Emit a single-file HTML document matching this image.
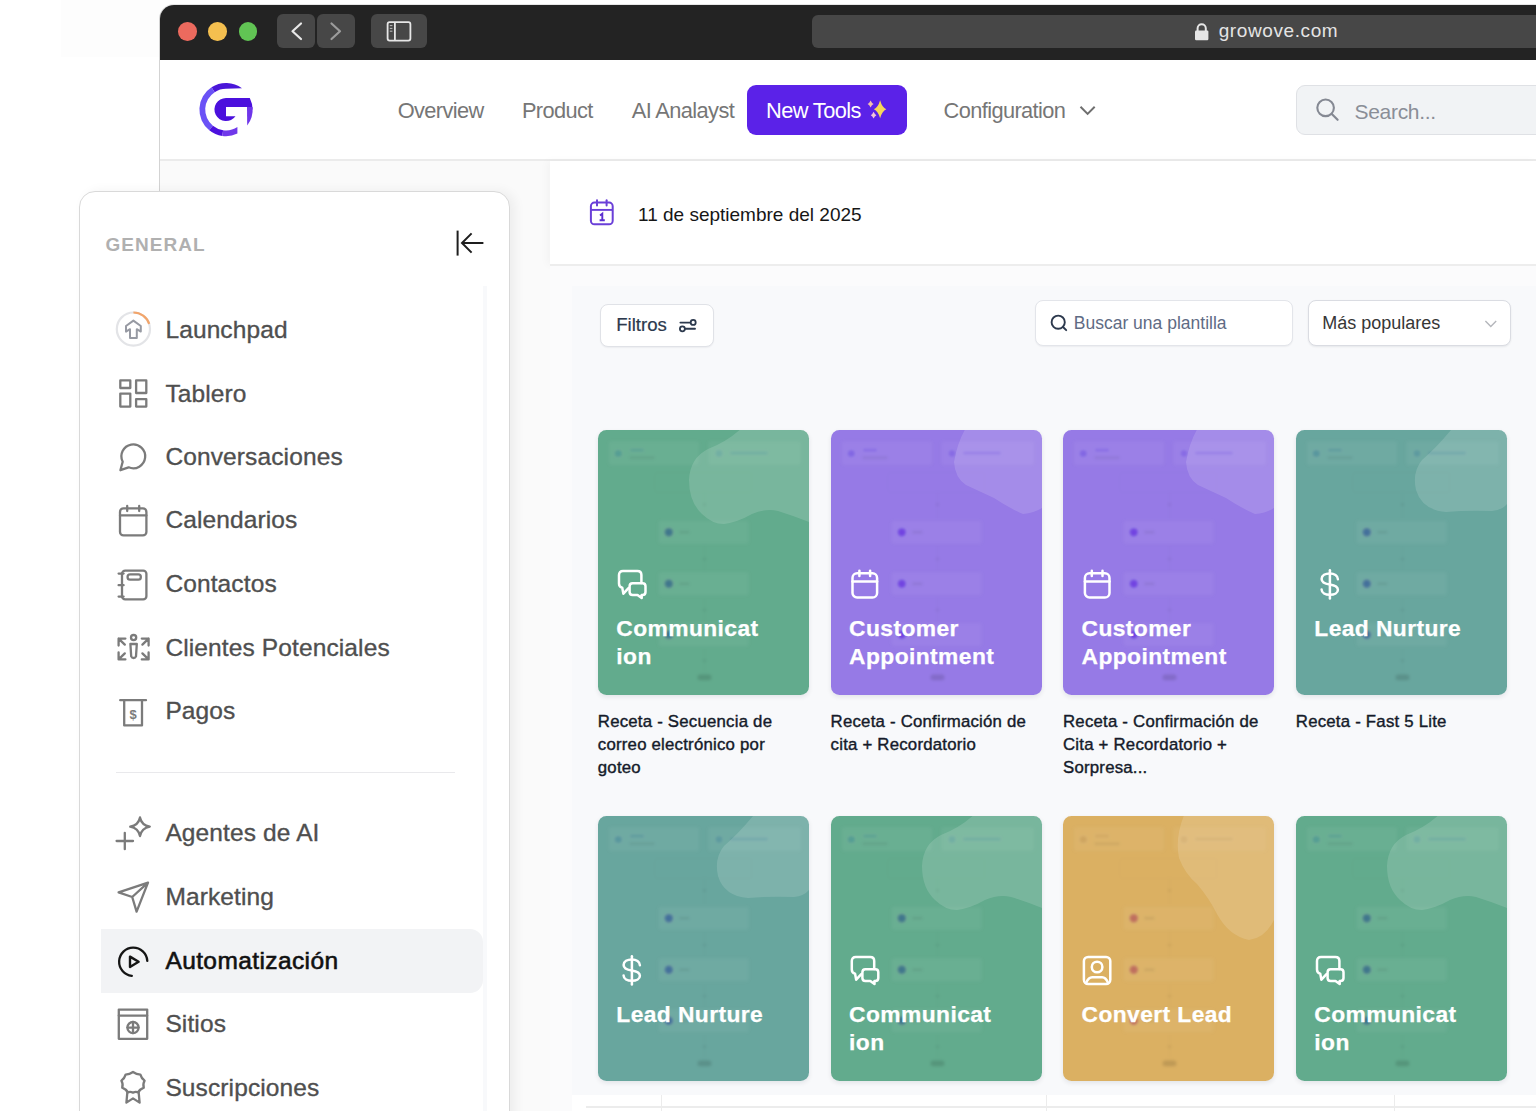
<!DOCTYPE html><html><head><meta charset="utf-8"><style>
*{margin:0;padding:0;box-sizing:border-box}
html,body{width:1536px;height:1120px;overflow:hidden;background:#fff}
body{position:relative;font-family:"Liberation Sans",sans-serif}
.a{position:absolute}
.t{position:absolute;white-space:nowrap;line-height:1}
svg{position:absolute;overflow:visible}
</style></head><body><div class="a" style="left:0;top:0;width:1536px;height:1111.3px;overflow:hidden"><div class="a" style="left:61px;top:0;width:99px;height:57px;background:#fdfdfd"></div>
<div class="a" style="left:158.5px;top:4px;width:1400px;height:1108px;border-left:1.6px solid #d3d3d3;border-top:1px solid #e6e6e6;border-top-left-radius:15px"></div>
<div class="a" style="left:160px;top:59px;width:1376px;height:1052px;background:#fff"></div>
<div class="a" style="left:160px;top:4.6px;width:1376px;height:55px;background:#232323;border-top-left-radius:14px"></div>
<div class="a" style="left:178.00px;top:22.00px;width:18.6px;height:18.6px;border-radius:50%;background:#ec6a5e"></div>
<div class="a" style="left:208.30px;top:22.00px;width:18.6px;height:18.6px;border-radius:50%;background:#f4bf4f"></div>
<div class="a" style="left:238.80px;top:22.00px;width:18.6px;height:18.6px;border-radius:50%;background:#61c454"></div>
<div class="a" style="left:277.3px;top:14.4px;width:38px;height:33.6px;border-radius:6px;background:#474747"></div>
<div class="a" style="left:317.4px;top:14.4px;width:37.3px;height:33.6px;border-radius:6px;background:#474747"></div>
<div class="a" style="left:370.7px;top:14.4px;width:56.3px;height:33.6px;border-radius:6px;background:#474747"></div>
<svg style="left:0;top:0" width="1536" height="70" viewBox="0 0 1536 70"><polyline points="301,23.5 292.5,31.2 301,39" fill="none" stroke="#e8e8e8" stroke-width="2.2" stroke-linecap="round" stroke-linejoin="round"/><polyline points="331.5,23.5 340,31.2 331.5,39" fill="none" stroke="#9c9c9c" stroke-width="2.2" stroke-linecap="round" stroke-linejoin="round"/><rect x="387.6" y="22.2" width="22.8" height="18.4" rx="2" fill="none" stroke="#e6e6e6" stroke-width="1.8"/><line x1="394.9" y1="22.2" x2="394.9" y2="40.6" stroke="#e6e6e6" stroke-width="1.8"/><line x1="389.8" y1="25.6" x2="392.4" y2="25.6" stroke="#bdbdbd" stroke-width="1"/><line x1="389.8" y1="28.4" x2="392.4" y2="28.4" stroke="#bdbdbd" stroke-width="1"/><line x1="389.8" y1="31.2" x2="392.4" y2="31.2" stroke="#bdbdbd" stroke-width="1"/></svg>
<div class="a" style="left:811.8px;top:14.7px;width:900px;height:33.3px;border-radius:6px;background:#474747"></div>
<svg style="left:0;top:0" width="1536" height="70" viewBox="0 0 1536 70"><path d="M1197.6 31.5 V28.3 A4.1 4.1 0 0 1 1205.8 28.3 V31.5" fill="none" stroke="#e6e6e6" stroke-width="2"/><rect x="1195" y="30.6" width="13.4" height="9.6" rx="1.2" fill="#e6e6e6"/></svg>
<div class="t" style="left:1218.70px;top:21.22px;font-size:19px;color:#e4e4e4;font-weight:400;letter-spacing:0.6px">growove.com</div>
<div class="a" style="left:160px;top:159px;width:1376px;height:1.5px;background:#ebebeb"></div>
<svg style="left:190px;top:75px" width="70" height="70" viewBox="190 75 70 70"><path d="M242 88.35 A26.6 26.6 0 0 0 211.51 87.29 L214.67 92.16 A20.8 20.8 0 0 1 226 88.8 Z" fill="#4a16d9"/><path d="M211.51 87.29 A26.6 26.6 0 0 0 209.26 130.27 L212.91 125.76 A20.8 20.8 0 0 1 214.67 92.16 Z" fill="#6a52f6"/><path d="M209.26 130.27 A26.6 26.6 0 0 0 222.30 135.94 L223.11 130.20 A20.8 20.8 0 0 1 212.91 125.76 Z" fill="#4c10de"/><path d="M222.30 135.94 A26.6 26.6 0 0 0 237.4 133.6 L237.4 127 A20.8 20.8 0 0 1 223.11 130.20 Z" fill="#7038ea"/><path d="M226 97.9 H249.8 A26.6 26.6 0 0 1 252.6 109.6 H247 V107 H226 V116.2 H235.5 A11.6 11.6 0 1 1 226 97.9 Z" fill="#4b10dd"/><path d="M247 107 H252.55 A26.6 26.6 0 0 1 247.2 125.6 Z" fill="#6f36ea"/></svg>
<div class="t" style="left:397.70px;top:99.85px;font-size:21.8px;color:#767676;font-weight:400;letter-spacing:-0.6px">Overview</div>
<div class="t" style="left:521.90px;top:99.85px;font-size:21.8px;color:#767676;font-weight:400;letter-spacing:-0.6px">Product</div>
<div class="t" style="left:631.70px;top:99.85px;font-size:21.8px;color:#767676;font-weight:400;letter-spacing:-0.6px">AI Analayst</div>
<div class="a" style="left:746.7px;top:85.3px;width:160.3px;height:49.7px;border-radius:9px;background:#5b22e8"></div>
<div class="t" style="left:766.00px;top:99.85px;font-size:21.8px;color:#ffffff;font-weight:400;letter-spacing:-0.6px">New Tools</div>
<svg style="left:0;top:0" width="1536" height="160" viewBox="0 0 1536 160"><defs><filter id="spb" x="-50%" y="-50%" width="200%" height="200%"><feGaussianBlur stdDeviation="0.45"/></filter></defs><g filter="url(#spb)"><path d="M880.1 100.2 Q882.0840000000001 107.4 886.3000000000001 109.2 Q882.0840000000001 111.0 880.1 118.2 Q878.116 111.0 873.9 109.2 Q878.116 107.4 880.1 100.2 Z" fill="#f6d65a"/><path d="M870.6 100.4 Q871.8000000000001 103.1 873.6 104 Q871.8000000000001 104.9 870.6 107.6 Q869.4 104.9 867.6 104 Q869.4 103.1 870.6 100.4 Z" fill="#f2bfae"/><path d="M873.6 111.8 Q874.72 114.35000000000001 876.4 115.2 Q874.72 116.05 873.6 118.60000000000001 Q872.48 116.05 870.8000000000001 115.2 Q872.48 114.35000000000001 873.6 111.8 Z" fill="#f4c6d8"/></g></svg>
<div class="t" style="left:943.50px;top:99.85px;font-size:21.8px;color:#767676;font-weight:400;letter-spacing:-0.6px">Configuration</div>
<svg style="left:0;top:0" width="1536" height="160" viewBox="0 0 1536 160"><polyline points="1080.5,106.8 1087.6,113.9 1094.7,106.8" fill="none" stroke="#6f6f6f" stroke-width="2"/></svg>
<div class="a" style="left:1296.2px;top:84.7px;width:300px;height:50.6px;border-radius:9px;background:#f1f3f5;border:1.3px solid #dfe1e5"></div>
<svg style="left:0;top:0" width="1536" height="160" viewBox="0 0 1536 160"><circle cx="1325.6" cy="107.8" r="8.3" fill="none" stroke="#858993" stroke-width="2.1"/><line x1="1331.8" y1="114" x2="1337.6" y2="119.8" stroke="#858993" stroke-width="2.2" stroke-linecap="round"/></svg>
<div class="t" style="left:1354.50px;top:100.92px;font-size:21px;color:#8a8e97;font-weight:400;letter-spacing:-0.3px">Search...</div>
<div class="a" style="left:160px;top:160.5px;width:390px;height:950.5px;background:#fafafa"></div>
<div class="a" style="left:550px;top:160.5px;width:986px;height:104px;background:#fff;box-shadow:-3px 0 8px rgba(0,0,0,0.03)"></div>
<div class="a" style="left:550px;top:264px;width:986px;height:1.5px;background:#ededed"></div>
<div class="a" style="left:550px;top:265.5px;width:986px;height:845.5px;background:#fbfbfc"></div>
<svg style="left:0;top:0" width="1536" height="300" viewBox="0 0 1536 300"><rect x="590.9" y="202.6" width="21.8" height="21.7" rx="3.6" fill="none" stroke="#6a3fd8" stroke-width="2"/><line x1="590.9" y1="209.9" x2="612.7" y2="209.9" stroke="#6a3fd8" stroke-width="1.9"/><line x1="597" y1="200.2" x2="597" y2="205.6" stroke="#6a3fd8" stroke-width="2" stroke-linecap="round"/><line x1="606.6" y1="200.2" x2="606.6" y2="205.6" stroke="#6a3fd8" stroke-width="2" stroke-linecap="round"/><path d="M600 215.4 L602.3 213.7 V220.2 M599.6 220.3 H604.8" fill="none" stroke="#5a2fd0" stroke-width="1.9"/></svg>
<div class="t" style="left:638.00px;top:204.72px;font-size:19px;color:#161616;font-weight:400;">11 de septiembre del 2025</div>
<div class="a" style="left:79.2px;top:190.6px;width:430.4px;height:940px;background:#fff;border:1.8px solid #d9d9d9;border-radius:16px;box-shadow:5px 0 12px rgba(0,0,0,0.055)"></div>
<div class="t" style="left:105.50px;top:235.12px;font-size:19px;color:#b0b0b0;font-weight:700;letter-spacing:1.05px">GENERAL</div>
<svg style="left:0;top:0" width="600" height="300" viewBox="0 0 600 300"><line x1="457.6" y1="230.6" x2="457.6" y2="255.6" stroke="#1e1e1e" stroke-width="2"/><line x1="462" y1="243" x2="483.4" y2="243" stroke="#1e1e1e" stroke-width="2"/><polyline points="471.6,233.4 462,243 471.6,252.6" fill="none" stroke="#1e1e1e" stroke-width="2"/></svg>
<div class="a" style="left:483px;top:285.8px;width:4px;height:830px;background:#f8f9fb"></div>
<div class="a" style="left:100.7px;top:928.9px;width:382.3px;height:63.8px;background:#f2f3f5;border-radius:0 13px 13px 0"></div>
<div class="a" style="left:116px;top:771.5px;width:339.3px;height:1.5px;background:#e9e9ec"></div>
<div class="t" style="left:165.40px;top:317.66px;font-size:24.5px;color:#4f4f4f;font-weight:400;-webkit-text-stroke:0.35px #4f4f4f;letter-spacing:0.12px">Launchpad</div>
<div class="t" style="left:165.40px;top:381.66px;font-size:24.5px;color:#4f4f4f;font-weight:400;-webkit-text-stroke:0.35px #4f4f4f;letter-spacing:0.12px">Tablero</div>
<div class="t" style="left:165.40px;top:445.36px;font-size:24.5px;color:#4f4f4f;font-weight:400;-webkit-text-stroke:0.35px #4f4f4f;letter-spacing:0.12px">Conversaciones</div>
<div class="t" style="left:165.40px;top:508.46px;font-size:24.5px;color:#4f4f4f;font-weight:400;-webkit-text-stroke:0.35px #4f4f4f;letter-spacing:0.12px">Calendarios</div>
<div class="t" style="left:165.40px;top:572.26px;font-size:24.5px;color:#4f4f4f;font-weight:400;-webkit-text-stroke:0.35px #4f4f4f;letter-spacing:0.12px">Contactos</div>
<div class="t" style="left:165.40px;top:635.86px;font-size:24.5px;color:#4f4f4f;font-weight:400;-webkit-text-stroke:0.35px #4f4f4f;letter-spacing:0.12px">Clientes Potenciales</div>
<div class="t" style="left:165.40px;top:699.26px;font-size:24.5px;color:#4f4f4f;font-weight:400;-webkit-text-stroke:0.35px #4f4f4f;letter-spacing:0.12px">Pagos</div>
<div class="t" style="left:165.40px;top:820.96px;font-size:24.5px;color:#4f4f4f;font-weight:400;-webkit-text-stroke:0.35px #4f4f4f;letter-spacing:0.12px">Agentes de AI</div>
<div class="t" style="left:165.40px;top:884.76px;font-size:24.5px;color:#4f4f4f;font-weight:400;-webkit-text-stroke:0.35px #4f4f4f;letter-spacing:0.12px">Marketing</div>
<div class="t" style="left:165.40px;top:948.56px;font-size:24.5px;color:#111111;font-weight:400;-webkit-text-stroke:0.35px #111111;letter-spacing:0.4px;-webkit-text-stroke:0.6px #111">Automatización</div>
<div class="t" style="left:165.40px;top:1011.56px;font-size:24.5px;color:#4f4f4f;font-weight:400;-webkit-text-stroke:0.35px #4f4f4f;letter-spacing:0.12px">Sitios</div>
<div class="t" style="left:165.40px;top:1075.66px;font-size:24.5px;color:#4f4f4f;font-weight:400;-webkit-text-stroke:0.35px #4f4f4f;letter-spacing:0.12px">Suscripciones</div>
<svg style="left:0;top:0" width="600" height="1120" viewBox="0 0 600 1120"><circle cx="133.4" cy="329.1" r="16.6" fill="none" stroke="#e3e4e7" stroke-width="2.2"/><path d="M133.4 312.5 A16.6 16.6 0 0 1 149.2 323.9" fill="none" stroke="#f2a56b" stroke-width="2.2"/><path d="M133.4 320.6 L140.8 326 V331.6 L136.8 329.2 V338 H130 V329.2 L126 331.6 V326 Z" fill="none" stroke="#979aa3" stroke-width="2" stroke-linejoin="round"/><rect x="120.3" y="380.4" width="10" height="7.6" fill="none" stroke="#7b7b7b" stroke-width="2.3" stroke-linecap="round" stroke-linejoin="round" stroke-linecap="butt" stroke-linejoin="miter"/><rect x="136.1" y="380.4" width="10.2" height="12.6" fill="none" stroke="#7b7b7b" stroke-width="2.3" stroke-linecap="round" stroke-linejoin="round" stroke-linecap="butt" stroke-linejoin="miter"/><rect x="120.3" y="393.6" width="10" height="13" fill="none" stroke="#7b7b7b" stroke-width="2.3" stroke-linecap="round" stroke-linejoin="round" stroke-linecap="butt" stroke-linejoin="miter"/><rect x="136.1" y="399.2" width="10.2" height="7.4" fill="none" stroke="#7b7b7b" stroke-width="2.3" stroke-linecap="round" stroke-linejoin="round" stroke-linecap="butt" stroke-linejoin="miter"/><path d="M122.7 461.8 A11.9 11.9 0 1 1 128.6 467.3 L120.4 470.2 Z" fill="none" stroke="#7b7b7b" stroke-width="2.3" stroke-linecap="round" stroke-linejoin="round"/><rect x="120" y="508.4" width="26.4" height="27" rx="3.5" fill="none" stroke="#7b7b7b" stroke-width="2.3" stroke-linecap="round" stroke-linejoin="round"/><line x1="120" y1="515.4" x2="146.4" y2="515.4" fill="none" stroke="#7b7b7b" stroke-width="2.3" stroke-linecap="round" stroke-linejoin="round"/><line x1="127.2" y1="506" x2="127.2" y2="511" fill="none" stroke="#7b7b7b" stroke-width="2.3" stroke-linecap="round" stroke-linejoin="round"/><line x1="139.2" y1="506" x2="139.2" y2="511" fill="none" stroke="#7b7b7b" stroke-width="2.3" stroke-linecap="round" stroke-linejoin="round"/><rect x="122" y="570.6" width="24.4" height="28.8" rx="3.2" fill="none" stroke="#7b7b7b" stroke-width="2.3" stroke-linecap="round" stroke-linejoin="round"/><rect x="127.6" y="574.4" width="13.2" height="5.2" rx="2.4" fill="none" stroke="#7b7b7b" stroke-width="2.3" stroke-linecap="round" stroke-linejoin="round"/><path d="M118.6 573.6 H123.6 M118.6 585.2 H123.6 M118.6 596.6 H123.6" fill="none" stroke="#7b7b7b" stroke-width="2.3" stroke-linecap="round" stroke-linejoin="round"/><circle cx="133.6" cy="637.6" r="2.6" fill="none" stroke="#7b7b7b" stroke-width="2.3" stroke-linecap="round" stroke-linejoin="round" stroke-width="1.9"/><path d="M130.4 644 H136.8 L136 656.4 A2.6 2.6 0 0 1 131.2 656.4 Z" fill="none" stroke="#7b7b7b" stroke-width="2.3" stroke-linecap="round" stroke-linejoin="round" stroke-width="1.9"/><path d="M118.6 645.6 V638.6 H125.4 M118.6 638.6 L124.8 644.6" fill="none" stroke="#7b7b7b" stroke-width="2.3" stroke-linecap="round" stroke-linejoin="round" stroke-width="1.9"/><path d="M148.6 645.6 V638.6 H141.8 M148.6 638.6 L142.4 644.6" fill="none" stroke="#7b7b7b" stroke-width="2.3" stroke-linecap="round" stroke-linejoin="round" stroke-width="1.9"/><path d="M118.6 652.4 V659.4 H125.4 M118.6 659.4 L124.8 653.4" fill="none" stroke="#7b7b7b" stroke-width="2.3" stroke-linecap="round" stroke-linejoin="round" stroke-width="1.9"/><path d="M148.6 652.4 V659.4 H141.8 M148.6 659.4 L142.4 653.4" fill="none" stroke="#7b7b7b" stroke-width="2.3" stroke-linecap="round" stroke-linejoin="round" stroke-width="1.9"/><line x1="120.2" y1="700.2" x2="146" y2="700.2" fill="none" stroke="#7b7b7b" stroke-width="2.3" stroke-linecap="round" stroke-linejoin="round"/><path d="M124.2 700.2 V725.4 H142 V700.2" fill="none" stroke="#7b7b7b" stroke-width="2.3" stroke-linecap="round" stroke-linejoin="round"/><text x="133.1" y="718.6" font-family="Liberation Sans" font-size="13" font-weight="700" fill="#7b7b7b" text-anchor="middle">$</text><path d="M116.6 841 H133 M124.8 832.8 V849.2" fill="none" stroke="#7b7b7b" stroke-width="2.3" stroke-linecap="round" stroke-linejoin="round"/><path d="M140 817.4 Q141.6 825.2 149.8 826.6 Q141.6 828.2 140 836 Q138.4 828.2 130.2 826.6 Q138.4 825.2 140 817.4 Z" fill="none" stroke="#7b7b7b" stroke-width="2.3" stroke-linecap="round" stroke-linejoin="round"/><path d="M148 882.6 L118.6 892.4 L132.2 897 L136.6 911.6 Z M148 882.6 L132.2 897" fill="none" stroke="#7b7b7b" stroke-width="2.3" stroke-linecap="round" stroke-linejoin="round"/><path d="M147.3 960.8 A14.1 14.1 0 1 0 131.8 975.8" fill="none" stroke="#151515" stroke-width="2.3" stroke-linecap="round"/><path d="M130 956.6 L138.6 961.8 L130 967 Z" fill="none" stroke="#151515" stroke-width="2.4" stroke-linejoin="round"/><rect x="118.8" y="1009.6" width="28.4" height="29.2" fill="none" stroke="#7b7b7b" stroke-width="2.3" stroke-linecap="round" stroke-linejoin="round" stroke-linecap="butt" stroke-linejoin="miter"/><line x1="118.8" y1="1015.6" x2="147.2" y2="1015.6" fill="none" stroke="#7b7b7b" stroke-width="2.3" stroke-linecap="round" stroke-linejoin="round"/><circle cx="133" cy="1027.6" r="5.6" fill="none" stroke="#7b7b7b" stroke-width="2.3" stroke-linecap="round" stroke-linejoin="round" stroke-width="1.8"/><path d="M127.4 1027.6 H138.6 M133 1022 V1033.2" fill="none" stroke="#7b7b7b" stroke-width="2.3" stroke-linecap="round" stroke-linejoin="round" stroke-width="1.4"/><path d="M133 1072 Q136.4 1074.4 140.4 1074.6 Q141.4 1078.4 144.6 1080.6 Q142.6 1084 143.8 1087.6 Q140 1089 138.2 1092.4 Q135.8 1091.4 133 1092.6 Q130.2 1091.4 127.8 1092.4 Q126 1089 122.2 1087.6 Q123.4 1084 121.4 1080.6 Q124.6 1078.4 125.6 1074.6 Q129.6 1074.4 133 1072 Z" fill="none" stroke="#7b7b7b" stroke-width="2.3" stroke-linecap="round" stroke-linejoin="round" stroke-width="2"/><path d="M127.4 1091.6 L126.4 1102.6 L133 1098.4 L139.6 1102.6 L138.6 1091.6" fill="none" stroke="#7b7b7b" stroke-width="2.3" stroke-linecap="round" stroke-linejoin="round" stroke-width="2"/></svg>
<div class="a" style="left:572.4px;top:285.5px;width:964px;height:809.5px;background:#f8f9fb"></div>
<div class="a" style="left:572.4px;top:1095px;width:964px;height:16px;background:#fff"></div>
<div class="a" style="left:585.6px;top:1106.4px;width:951px;height:1.2px;background:#ececec"></div>
<div class="a" style="left:660.9px;top:1095px;width:1.2px;height:16px;background:#ececec"></div>
<div class="a" style="left:1045.5px;top:1095px;width:1.2px;height:16px;background:#ececec"></div>
<div class="a" style="left:1393.5px;top:1095px;width:1.2px;height:16px;background:#ececec"></div>
<div class="a" style="left:600.1px;top:304.4px;width:113.5px;height:42.2px;border-radius:8px;background:#fff;border:1.3px solid #e0e2e7;box-shadow:0 1px 1.5px rgba(16,24,40,0.05)"></div>
<div class="t" style="left:616.25px;top:316.06px;font-size:18.6px;color:#2c394d;font-weight:400;-webkit-text-stroke:0.2px #2c394d">Filtros</div>
<svg style="left:0;top:0" width="1536" height="400" viewBox="0 0 1536 400"><path d="M680.4 322.6 H690.8 M684.6 328.8 H695" fill="none" stroke="#2c394d" stroke-width="1.9" stroke-linecap="round"/><circle cx="693.2" cy="322.4" r="2.5" fill="#fff" stroke="#2c394d" stroke-width="1.8"/><circle cx="682.4" cy="328.8" r="2.5" fill="#fff" stroke="#2c394d" stroke-width="1.8"/></svg>
<div class="a" style="left:1034.6px;top:300.4px;width:258.4px;height:46px;border-radius:8px;background:#fff;border:1.3px solid #e3e5ea;box-shadow:0 1px 1.5px rgba(16,24,40,0.05)"></div>
<svg style="left:0;top:0" width="1536" height="400" viewBox="0 0 1536 400"><circle cx="1058.2" cy="322.2" r="6.6" fill="none" stroke="#2c394d" stroke-width="1.9"/><line x1="1063" y1="327" x2="1066.2" y2="330.2" stroke="#2c394d" stroke-width="1.9" stroke-linecap="round"/></svg>
<div class="t" style="left:1073.80px;top:314.99px;font-size:17.5px;color:#5f6b84;font-weight:400;">Buscar una plantilla</div>
<div class="a" style="left:1308.2px;top:300.2px;width:202.4px;height:46.2px;border-radius:8px;background:#fff;border:1.3px solid #dadce2;box-shadow:0 1px 2px rgba(16,24,40,0.08)"></div>
<div class="t" style="left:1322.30px;top:313.96px;font-size:18px;color:#363636;font-weight:400;">Más populares</div>
<svg style="left:0;top:0" width="1536" height="400" viewBox="0 0 1536 400"><polyline points="1485.4,321 1490.8,326.4 1496.2,321" fill="none" stroke="#b4b6bb" stroke-width="1.4"/></svg>
<div class="a" style="left:598.1px;top:429.9px;width:210.9px;height:265.0px;border-radius:8.5px;background:#62ab8d;overflow:hidden;box-shadow:0 2px 5px rgba(16,24,40,0.09)"><svg style="left:0;top:0" width="210.9" height="265.0" viewBox="0 0 210.9 265.0"><filter id="bl1" x="-20%" y="-20%" width="140%" height="140%"><feGaussianBlur stdDeviation="1.8"/></filter><g filter="url(#bl1)"><rect x="10.5" y="11" width="91.0" height="24.5" rx="3" fill="#fff" fill-opacity="0.045" stroke="#000" stroke-opacity="0.025" stroke-width="1.2"/><rect x="110" y="11" width="93.5" height="24.5" rx="3" fill="#fff" fill-opacity="0.045" stroke="#000" stroke-opacity="0.025" stroke-width="1.2"/><rect x="57" y="42.5" width="97" height="20" rx="3" fill="none" stroke="#000" stroke-opacity="0.02" stroke-width="1"/><rect x="60.3" y="90.5" width="90.7" height="23.5" rx="3" fill="#fff" fill-opacity="0.045" stroke="#000" stroke-opacity="0.025" stroke-width="1.2"/><rect x="60.3" y="142" width="90.7" height="23.599999999999994" rx="3" fill="#fff" fill-opacity="0.045" stroke="#000" stroke-opacity="0.025" stroke-width="1.2"/><rect x="60.3" y="193" width="90.7" height="23.5" rx="3" fill="#fff" fill-opacity="0.045" stroke="#000" stroke-opacity="0.025" stroke-width="1.2"/><circle cx="20.3" cy="23.5" r="3.6" fill="#4e9796" fill-opacity="0.75"/><rect x="32" y="18.8" width="14" height="2.6" fill="#4e9796" fill-opacity="0.6"/><rect x="31.3" y="26.4" width="25.6" height="2.8" fill="#000" fill-opacity="0.08"/><circle cx="121" cy="23.5" r="3.4" fill="#4e9796" fill-opacity="0.6"/><rect x="132" y="21.6" width="38" height="3" fill="#4e9796" fill-opacity="0.55"/><circle cx="70.8" cy="102.2" r="4.2" fill="#3a6c8c" fill-opacity="0.85"/><rect x="81" y="100.7" width="10.5" height="3" fill="#000" fill-opacity="0.08"/><circle cx="70.8" cy="153.8" r="4.2" fill="#3a6c8c" fill-opacity="0.85"/><rect x="81" y="152.3" width="10.5" height="3" fill="#000" fill-opacity="0.08"/><circle cx="70.8" cy="204.8" r="4.2" fill="#3a6c8c" fill-opacity="0.85"/><rect x="81" y="203.3" width="10.5" height="3" fill="#000" fill-opacity="0.08"/><circle cx="106.5" cy="74.5" r="1.6" fill="#000" fill-opacity="0.07"/><circle cx="106.5" cy="129" r="1.6" fill="#000" fill-opacity="0.07"/><circle cx="106.5" cy="180" r="1.6" fill="#000" fill-opacity="0.07"/><circle cx="106.5" cy="230.7" r="1.6" fill="#000" fill-opacity="0.07"/><line x1="106.5" y1="62.5" x2="106.5" y2="90.5" stroke="#000" stroke-opacity="0.03" stroke-width="1"/><line x1="106.5" y1="114" x2="106.5" y2="142" stroke="#000" stroke-opacity="0.03" stroke-width="1"/><line x1="106.5" y1="165.6" x2="106.5" y2="193" stroke="#000" stroke-opacity="0.03" stroke-width="1"/><line x1="106.5" y1="216.5" x2="106.5" y2="243" stroke="#000" stroke-opacity="0.03" stroke-width="1"/><rect x="99.5" y="244.6" width="14" height="5.6" rx="2.8" fill="#000" fill-opacity="0.13"/></g><path d="M141.6 0 Q128 12 110 19 Q92 28 91 50 Q91 72 104 84 Q114 94 126 94 Q140 92 154 84 Q168 78 180 81 Q196 86 211 92 V0 Z" fill="#fff" fill-opacity="0.14"/></svg></div>
<svg style="left:0;top:0" width="1536" height="1120" viewBox="0 0 1536 1120"><g transform="translate(617.30,569.50)"><path d="M24.1 13.4 V5.6 Q24.1 1.6 20.1 1.6 H5.7 Q1.7 1.6 1.7 5.6 V14 Q1.7 17.4 4.9 18.1 L6.1 24.2 L11.2 18.6" fill="none" stroke="#fff" stroke-width="2.5" stroke-linejoin="round" stroke-linecap="round"/><path d="M15.3 13.7 H25.2 Q28.2 13.7 28.2 16.7 V22.5 Q28.2 25.5 25.2 25.5 H24.4 V28.6 L20.2 25.5 H15.3 Q12.3 25.5 12.3 22.5 V16.7 Q12.3 13.7 15.3 13.7 Z" fill="none" stroke="#fff" stroke-width="2.5" stroke-linejoin="round" stroke-linecap="round"/></g></svg>
<div class="t" style="left:616.3000000000001px;top:614.85px;font-size:22.8px;line-height:27.7px;color:#fff;font-weight:700;white-space:nowrap;letter-spacing:0.42px;-webkit-text-stroke:0.25px #fff">Communicat<br>ion</div>
<div class="t" style="left:597.8000000000001px;top:709.73px;font-size:16.8px;line-height:23.3px;color:#151b2a;letter-spacing:0.22px;-webkit-text-stroke:0.4px #151b2a;white-space:nowrap">Receta - Secuencia de<br>correo electrónico por<br>goteo</div>
<div class="a" style="left:830.9px;top:429.9px;width:210.9px;height:265.0px;border-radius:8.5px;background:#967ae6;overflow:hidden;box-shadow:0 2px 5px rgba(16,24,40,0.09)"><svg style="left:0;top:0" width="210.9" height="265.0" viewBox="0 0 210.9 265.0"><filter id="bl2" x="-20%" y="-20%" width="140%" height="140%"><feGaussianBlur stdDeviation="1.8"/></filter><g filter="url(#bl2)"><rect x="10.5" y="11" width="91.0" height="24.5" rx="3" fill="#fff" fill-opacity="0.045" stroke="#000" stroke-opacity="0.025" stroke-width="1.2"/><rect x="110" y="11" width="93.5" height="24.5" rx="3" fill="#fff" fill-opacity="0.045" stroke="#000" stroke-opacity="0.025" stroke-width="1.2"/><rect x="57" y="42.5" width="97" height="20" rx="3" fill="none" stroke="#000" stroke-opacity="0.02" stroke-width="1"/><rect x="60.3" y="90.5" width="90.7" height="23.5" rx="3" fill="#fff" fill-opacity="0.045" stroke="#000" stroke-opacity="0.025" stroke-width="1.2"/><rect x="60.3" y="142" width="90.7" height="23.599999999999994" rx="3" fill="#fff" fill-opacity="0.045" stroke="#000" stroke-opacity="0.025" stroke-width="1.2"/><rect x="60.3" y="193" width="90.7" height="23.5" rx="3" fill="#fff" fill-opacity="0.045" stroke="#000" stroke-opacity="0.025" stroke-width="1.2"/><circle cx="20.3" cy="23.5" r="3.6" fill="#7a5ce2" fill-opacity="0.75"/><rect x="32" y="18.8" width="14" height="2.6" fill="#7a5ce2" fill-opacity="0.6"/><rect x="31.3" y="26.4" width="25.6" height="2.8" fill="#000" fill-opacity="0.08"/><circle cx="121" cy="23.5" r="3.4" fill="#7a5ce2" fill-opacity="0.6"/><rect x="132" y="21.6" width="38" height="3" fill="#7a5ce2" fill-opacity="0.55"/><circle cx="70.8" cy="102.2" r="4.2" fill="#6a3ae0" fill-opacity="0.85"/><rect x="81" y="100.7" width="10.5" height="3" fill="#000" fill-opacity="0.08"/><circle cx="70.8" cy="153.8" r="4.2" fill="#6a3ae0" fill-opacity="0.85"/><rect x="81" y="152.3" width="10.5" height="3" fill="#000" fill-opacity="0.08"/><circle cx="70.8" cy="204.8" r="4.2" fill="#6a3ae0" fill-opacity="0.85"/><rect x="81" y="203.3" width="10.5" height="3" fill="#000" fill-opacity="0.08"/><circle cx="106.5" cy="74.5" r="1.6" fill="#000" fill-opacity="0.07"/><circle cx="106.5" cy="129" r="1.6" fill="#000" fill-opacity="0.07"/><circle cx="106.5" cy="180" r="1.6" fill="#000" fill-opacity="0.07"/><circle cx="106.5" cy="230.7" r="1.6" fill="#000" fill-opacity="0.07"/><line x1="106.5" y1="62.5" x2="106.5" y2="90.5" stroke="#000" stroke-opacity="0.03" stroke-width="1"/><line x1="106.5" y1="114" x2="106.5" y2="142" stroke="#000" stroke-opacity="0.03" stroke-width="1"/><line x1="106.5" y1="165.6" x2="106.5" y2="193" stroke="#000" stroke-opacity="0.03" stroke-width="1"/><line x1="106.5" y1="216.5" x2="106.5" y2="243" stroke="#000" stroke-opacity="0.03" stroke-width="1"/><rect x="99.5" y="244.6" width="14" height="5.6" rx="2.8" fill="#000" fill-opacity="0.13"/></g><path d="M133.7 0 Q126 14 123 32 Q124 48 135 55 Q150 62 163 68 Q178 78 192 84 Q203 83 211 78 V0 Z" fill="#fff" fill-opacity="0.14"/></svg></div>
<svg style="left:0;top:0" width="1536" height="1120" viewBox="0 0 1536 1120"><g transform="translate(850.10,569.50)"><rect x="2.4" y="3.8" width="24.6" height="24.2" rx="4.6" fill="none" stroke="#fff" stroke-width="2.5" stroke-linejoin="round" stroke-linecap="round"/><line x1="2.4" y1="12.1" x2="27" y2="12.1" fill="none" stroke="#fff" stroke-width="2.5" stroke-linejoin="round" stroke-linecap="round"/><line x1="9.3" y1="1.3" x2="9.3" y2="6.6" fill="none" stroke="#fff" stroke-width="2.5" stroke-linejoin="round" stroke-linecap="round"/><line x1="20" y1="1.3" x2="20" y2="6.6" fill="none" stroke="#fff" stroke-width="2.5" stroke-linejoin="round" stroke-linecap="round"/></g></svg>
<div class="t" style="left:849.1px;top:614.85px;font-size:22.8px;line-height:27.7px;color:#fff;font-weight:700;white-space:nowrap;letter-spacing:0.42px;-webkit-text-stroke:0.25px #fff">Customer<br>Appointment</div>
<div class="t" style="left:830.6px;top:709.73px;font-size:16.8px;line-height:23.3px;color:#151b2a;letter-spacing:0.22px;-webkit-text-stroke:0.4px #151b2a;white-space:nowrap">Receta - Confirmación de<br>cita + Recordatorio</div>
<div class="a" style="left:1063.3px;top:429.9px;width:210.9px;height:265.0px;border-radius:8.5px;background:#967ae6;overflow:hidden;box-shadow:0 2px 5px rgba(16,24,40,0.09)"><svg style="left:0;top:0" width="210.9" height="265.0" viewBox="0 0 210.9 265.0"><filter id="bl3" x="-20%" y="-20%" width="140%" height="140%"><feGaussianBlur stdDeviation="1.8"/></filter><g filter="url(#bl3)"><rect x="10.5" y="11" width="91.0" height="24.5" rx="3" fill="#fff" fill-opacity="0.045" stroke="#000" stroke-opacity="0.025" stroke-width="1.2"/><rect x="110" y="11" width="93.5" height="24.5" rx="3" fill="#fff" fill-opacity="0.045" stroke="#000" stroke-opacity="0.025" stroke-width="1.2"/><rect x="57" y="42.5" width="97" height="20" rx="3" fill="none" stroke="#000" stroke-opacity="0.02" stroke-width="1"/><rect x="60.3" y="90.5" width="90.7" height="23.5" rx="3" fill="#fff" fill-opacity="0.045" stroke="#000" stroke-opacity="0.025" stroke-width="1.2"/><rect x="60.3" y="142" width="90.7" height="23.599999999999994" rx="3" fill="#fff" fill-opacity="0.045" stroke="#000" stroke-opacity="0.025" stroke-width="1.2"/><rect x="60.3" y="193" width="90.7" height="23.5" rx="3" fill="#fff" fill-opacity="0.045" stroke="#000" stroke-opacity="0.025" stroke-width="1.2"/><circle cx="20.3" cy="23.5" r="3.6" fill="#7a5ce2" fill-opacity="0.75"/><rect x="32" y="18.8" width="14" height="2.6" fill="#7a5ce2" fill-opacity="0.6"/><rect x="31.3" y="26.4" width="25.6" height="2.8" fill="#000" fill-opacity="0.08"/><circle cx="121" cy="23.5" r="3.4" fill="#7a5ce2" fill-opacity="0.6"/><rect x="132" y="21.6" width="38" height="3" fill="#7a5ce2" fill-opacity="0.55"/><circle cx="70.8" cy="102.2" r="4.2" fill="#6a3ae0" fill-opacity="0.85"/><rect x="81" y="100.7" width="10.5" height="3" fill="#000" fill-opacity="0.08"/><circle cx="70.8" cy="153.8" r="4.2" fill="#6a3ae0" fill-opacity="0.85"/><rect x="81" y="152.3" width="10.5" height="3" fill="#000" fill-opacity="0.08"/><circle cx="70.8" cy="204.8" r="4.2" fill="#6a3ae0" fill-opacity="0.85"/><rect x="81" y="203.3" width="10.5" height="3" fill="#000" fill-opacity="0.08"/><circle cx="106.5" cy="74.5" r="1.6" fill="#000" fill-opacity="0.07"/><circle cx="106.5" cy="129" r="1.6" fill="#000" fill-opacity="0.07"/><circle cx="106.5" cy="180" r="1.6" fill="#000" fill-opacity="0.07"/><circle cx="106.5" cy="230.7" r="1.6" fill="#000" fill-opacity="0.07"/><line x1="106.5" y1="62.5" x2="106.5" y2="90.5" stroke="#000" stroke-opacity="0.03" stroke-width="1"/><line x1="106.5" y1="114" x2="106.5" y2="142" stroke="#000" stroke-opacity="0.03" stroke-width="1"/><line x1="106.5" y1="165.6" x2="106.5" y2="193" stroke="#000" stroke-opacity="0.03" stroke-width="1"/><line x1="106.5" y1="216.5" x2="106.5" y2="243" stroke="#000" stroke-opacity="0.03" stroke-width="1"/><rect x="99.5" y="244.6" width="14" height="5.6" rx="2.8" fill="#000" fill-opacity="0.13"/></g><path d="M133.7 0 Q126 14 123 32 Q124 48 135 55 Q150 62 163 68 Q178 78 192 84 Q203 83 211 78 V0 Z" fill="#fff" fill-opacity="0.14"/></svg></div>
<svg style="left:0;top:0" width="1536" height="1120" viewBox="0 0 1536 1120"><g transform="translate(1082.50,569.50)"><rect x="2.4" y="3.8" width="24.6" height="24.2" rx="4.6" fill="none" stroke="#fff" stroke-width="2.5" stroke-linejoin="round" stroke-linecap="round"/><line x1="2.4" y1="12.1" x2="27" y2="12.1" fill="none" stroke="#fff" stroke-width="2.5" stroke-linejoin="round" stroke-linecap="round"/><line x1="9.3" y1="1.3" x2="9.3" y2="6.6" fill="none" stroke="#fff" stroke-width="2.5" stroke-linejoin="round" stroke-linecap="round"/><line x1="20" y1="1.3" x2="20" y2="6.6" fill="none" stroke="#fff" stroke-width="2.5" stroke-linejoin="round" stroke-linecap="round"/></g></svg>
<div class="t" style="left:1081.5px;top:614.85px;font-size:22.8px;line-height:27.7px;color:#fff;font-weight:700;white-space:nowrap;letter-spacing:0.42px;-webkit-text-stroke:0.25px #fff">Customer<br>Appointment</div>
<div class="t" style="left:1063.0px;top:709.73px;font-size:16.8px;line-height:23.3px;color:#151b2a;letter-spacing:0.22px;-webkit-text-stroke:0.4px #151b2a;white-space:nowrap">Receta - Confirmación de<br>Cita + Recordatorio +<br>Sorpresa...</div>
<div class="a" style="left:1296.1px;top:429.9px;width:210.9px;height:265.0px;border-radius:8.5px;background:#68a69e;overflow:hidden;box-shadow:0 2px 5px rgba(16,24,40,0.09)"><svg style="left:0;top:0" width="210.9" height="265.0" viewBox="0 0 210.9 265.0"><filter id="bl4" x="-20%" y="-20%" width="140%" height="140%"><feGaussianBlur stdDeviation="1.8"/></filter><g filter="url(#bl4)"><rect x="10.5" y="11" width="91.0" height="24.5" rx="3" fill="#fff" fill-opacity="0.045" stroke="#000" stroke-opacity="0.025" stroke-width="1.2"/><rect x="110" y="11" width="93.5" height="24.5" rx="3" fill="#fff" fill-opacity="0.045" stroke="#000" stroke-opacity="0.025" stroke-width="1.2"/><rect x="57" y="42.5" width="97" height="20" rx="3" fill="none" stroke="#000" stroke-opacity="0.02" stroke-width="1"/><rect x="60.3" y="90.5" width="90.7" height="23.5" rx="3" fill="#fff" fill-opacity="0.045" stroke="#000" stroke-opacity="0.025" stroke-width="1.2"/><rect x="60.3" y="142" width="90.7" height="23.599999999999994" rx="3" fill="#fff" fill-opacity="0.045" stroke="#000" stroke-opacity="0.025" stroke-width="1.2"/><rect x="60.3" y="193" width="90.7" height="23.5" rx="3" fill="#fff" fill-opacity="0.045" stroke="#000" stroke-opacity="0.025" stroke-width="1.2"/><circle cx="20.3" cy="23.5" r="3.6" fill="#4f8f9d" fill-opacity="0.75"/><rect x="32" y="18.8" width="14" height="2.6" fill="#4f8f9d" fill-opacity="0.6"/><rect x="31.3" y="26.4" width="25.6" height="2.8" fill="#000" fill-opacity="0.08"/><circle cx="121" cy="23.5" r="3.4" fill="#4f8f9d" fill-opacity="0.6"/><rect x="132" y="21.6" width="38" height="3" fill="#4f8f9d" fill-opacity="0.55"/><circle cx="70.8" cy="102.2" r="4.2" fill="#3d659a" fill-opacity="0.85"/><rect x="81" y="100.7" width="10.5" height="3" fill="#000" fill-opacity="0.08"/><circle cx="70.8" cy="153.8" r="4.2" fill="#3d659a" fill-opacity="0.85"/><rect x="81" y="152.3" width="10.5" height="3" fill="#000" fill-opacity="0.08"/><circle cx="70.8" cy="204.8" r="4.2" fill="#3d659a" fill-opacity="0.85"/><rect x="81" y="203.3" width="10.5" height="3" fill="#000" fill-opacity="0.08"/><circle cx="106.5" cy="74.5" r="1.6" fill="#000" fill-opacity="0.07"/><circle cx="106.5" cy="129" r="1.6" fill="#000" fill-opacity="0.07"/><circle cx="106.5" cy="180" r="1.6" fill="#000" fill-opacity="0.07"/><circle cx="106.5" cy="230.7" r="1.6" fill="#000" fill-opacity="0.07"/><line x1="106.5" y1="62.5" x2="106.5" y2="90.5" stroke="#000" stroke-opacity="0.03" stroke-width="1"/><line x1="106.5" y1="114" x2="106.5" y2="142" stroke="#000" stroke-opacity="0.03" stroke-width="1"/><line x1="106.5" y1="165.6" x2="106.5" y2="193" stroke="#000" stroke-opacity="0.03" stroke-width="1"/><line x1="106.5" y1="216.5" x2="106.5" y2="243" stroke="#000" stroke-opacity="0.03" stroke-width="1"/><rect x="99.5" y="244.6" width="14" height="5.6" rx="2.8" fill="#000" fill-opacity="0.13"/></g><path d="M155 0 Q140 18 126 30 Q116 42 120 60 Q126 80 150 82 Q172 80 196 81 Q206 80 211 74 V0 Z" fill="#fff" fill-opacity="0.14"/></svg></div>
<svg style="left:0;top:0" width="1536" height="1120" viewBox="0 0 1536 1120"><g transform="translate(1315.30,569.50)"><path d="M22.6 9.7 C22.6 6.2 19 3.9 14.6 3.9 C10 3.9 6.3 6 6.3 9.4 C6.3 12.8 9.5 14.2 14.6 15 C19.7 15.8 22.6 17.4 22.6 20.2 C22.6 23.4 19.2 25.3 14.6 25.3 C10 25.3 6.3 23.3 6.3 20" fill="none" stroke="#fff" stroke-width="2.5" stroke-linejoin="round" stroke-linecap="round"/><line x1="14.6" y1="0.8" x2="14.6" y2="29" fill="none" stroke="#fff" stroke-width="2.5" stroke-linejoin="round" stroke-linecap="round"/></g></svg>
<div class="t" style="left:1314.3px;top:614.85px;font-size:22.8px;line-height:27.7px;color:#fff;font-weight:700;white-space:nowrap;letter-spacing:0.42px;-webkit-text-stroke:0.25px #fff">Lead Nurture</div>
<div class="t" style="left:1295.8px;top:709.73px;font-size:16.8px;line-height:23.3px;color:#151b2a;letter-spacing:0.22px;-webkit-text-stroke:0.4px #151b2a;white-space:nowrap">Receta - Fast 5 Lite</div>
<div class="a" style="left:598.1px;top:815.9px;width:210.9px;height:265.0px;border-radius:8.5px;background:#68a69e;overflow:hidden;box-shadow:0 2px 5px rgba(16,24,40,0.09)"><svg style="left:0;top:0" width="210.9" height="265.0" viewBox="0 0 210.9 265.0"><filter id="bl5" x="-20%" y="-20%" width="140%" height="140%"><feGaussianBlur stdDeviation="1.8"/></filter><g filter="url(#bl5)"><rect x="10.5" y="11" width="91.0" height="24.5" rx="3" fill="#fff" fill-opacity="0.045" stroke="#000" stroke-opacity="0.025" stroke-width="1.2"/><rect x="110" y="11" width="93.5" height="24.5" rx="3" fill="#fff" fill-opacity="0.045" stroke="#000" stroke-opacity="0.025" stroke-width="1.2"/><rect x="57" y="42.5" width="97" height="20" rx="3" fill="none" stroke="#000" stroke-opacity="0.02" stroke-width="1"/><rect x="60.3" y="90.5" width="90.7" height="23.5" rx="3" fill="#fff" fill-opacity="0.045" stroke="#000" stroke-opacity="0.025" stroke-width="1.2"/><rect x="60.3" y="142" width="90.7" height="23.599999999999994" rx="3" fill="#fff" fill-opacity="0.045" stroke="#000" stroke-opacity="0.025" stroke-width="1.2"/><rect x="60.3" y="193" width="90.7" height="23.5" rx="3" fill="#fff" fill-opacity="0.045" stroke="#000" stroke-opacity="0.025" stroke-width="1.2"/><circle cx="20.3" cy="23.5" r="3.6" fill="#4f8f9d" fill-opacity="0.75"/><rect x="32" y="18.8" width="14" height="2.6" fill="#4f8f9d" fill-opacity="0.6"/><rect x="31.3" y="26.4" width="25.6" height="2.8" fill="#000" fill-opacity="0.08"/><circle cx="121" cy="23.5" r="3.4" fill="#4f8f9d" fill-opacity="0.6"/><rect x="132" y="21.6" width="38" height="3" fill="#4f8f9d" fill-opacity="0.55"/><circle cx="70.8" cy="102.2" r="4.2" fill="#3d659a" fill-opacity="0.85"/><rect x="81" y="100.7" width="10.5" height="3" fill="#000" fill-opacity="0.08"/><circle cx="70.8" cy="153.8" r="4.2" fill="#3d659a" fill-opacity="0.85"/><rect x="81" y="152.3" width="10.5" height="3" fill="#000" fill-opacity="0.08"/><circle cx="70.8" cy="204.8" r="4.2" fill="#3d659a" fill-opacity="0.85"/><rect x="81" y="203.3" width="10.5" height="3" fill="#000" fill-opacity="0.08"/><circle cx="106.5" cy="74.5" r="1.6" fill="#000" fill-opacity="0.07"/><circle cx="106.5" cy="129" r="1.6" fill="#000" fill-opacity="0.07"/><circle cx="106.5" cy="180" r="1.6" fill="#000" fill-opacity="0.07"/><circle cx="106.5" cy="230.7" r="1.6" fill="#000" fill-opacity="0.07"/><line x1="106.5" y1="62.5" x2="106.5" y2="90.5" stroke="#000" stroke-opacity="0.03" stroke-width="1"/><line x1="106.5" y1="114" x2="106.5" y2="142" stroke="#000" stroke-opacity="0.03" stroke-width="1"/><line x1="106.5" y1="165.6" x2="106.5" y2="193" stroke="#000" stroke-opacity="0.03" stroke-width="1"/><line x1="106.5" y1="216.5" x2="106.5" y2="243" stroke="#000" stroke-opacity="0.03" stroke-width="1"/><rect x="99.5" y="244.6" width="14" height="5.6" rx="2.8" fill="#000" fill-opacity="0.13"/></g><path d="M155 0 Q140 18 126 30 Q116 42 120 60 Q126 80 150 82 Q172 80 196 81 Q206 80 211 74 V0 Z" fill="#fff" fill-opacity="0.14"/></svg></div>
<svg style="left:0;top:0" width="1536" height="1120" viewBox="0 0 1536 1120"><g transform="translate(617.30,955.50)"><path d="M22.6 9.7 C22.6 6.2 19 3.9 14.6 3.9 C10 3.9 6.3 6 6.3 9.4 C6.3 12.8 9.5 14.2 14.6 15 C19.7 15.8 22.6 17.4 22.6 20.2 C22.6 23.4 19.2 25.3 14.6 25.3 C10 25.3 6.3 23.3 6.3 20" fill="none" stroke="#fff" stroke-width="2.5" stroke-linejoin="round" stroke-linecap="round"/><line x1="14.6" y1="0.8" x2="14.6" y2="29" fill="none" stroke="#fff" stroke-width="2.5" stroke-linejoin="round" stroke-linecap="round"/></g></svg>
<div class="t" style="left:616.3000000000001px;top:1000.85px;font-size:22.8px;line-height:27.7px;color:#fff;font-weight:700;white-space:nowrap;letter-spacing:0.42px;-webkit-text-stroke:0.25px #fff">Lead Nurture</div>
<div class="a" style="left:830.9px;top:815.9px;width:210.9px;height:265.0px;border-radius:8.5px;background:#62ab8d;overflow:hidden;box-shadow:0 2px 5px rgba(16,24,40,0.09)"><svg style="left:0;top:0" width="210.9" height="265.0" viewBox="0 0 210.9 265.0"><filter id="bl6" x="-20%" y="-20%" width="140%" height="140%"><feGaussianBlur stdDeviation="1.8"/></filter><g filter="url(#bl6)"><rect x="10.5" y="11" width="91.0" height="24.5" rx="3" fill="#fff" fill-opacity="0.045" stroke="#000" stroke-opacity="0.025" stroke-width="1.2"/><rect x="110" y="11" width="93.5" height="24.5" rx="3" fill="#fff" fill-opacity="0.045" stroke="#000" stroke-opacity="0.025" stroke-width="1.2"/><rect x="57" y="42.5" width="97" height="20" rx="3" fill="none" stroke="#000" stroke-opacity="0.02" stroke-width="1"/><rect x="60.3" y="90.5" width="90.7" height="23.5" rx="3" fill="#fff" fill-opacity="0.045" stroke="#000" stroke-opacity="0.025" stroke-width="1.2"/><rect x="60.3" y="142" width="90.7" height="23.599999999999994" rx="3" fill="#fff" fill-opacity="0.045" stroke="#000" stroke-opacity="0.025" stroke-width="1.2"/><rect x="60.3" y="193" width="90.7" height="23.5" rx="3" fill="#fff" fill-opacity="0.045" stroke="#000" stroke-opacity="0.025" stroke-width="1.2"/><circle cx="20.3" cy="23.5" r="3.6" fill="#4e9796" fill-opacity="0.75"/><rect x="32" y="18.8" width="14" height="2.6" fill="#4e9796" fill-opacity="0.6"/><rect x="31.3" y="26.4" width="25.6" height="2.8" fill="#000" fill-opacity="0.08"/><circle cx="121" cy="23.5" r="3.4" fill="#4e9796" fill-opacity="0.6"/><rect x="132" y="21.6" width="38" height="3" fill="#4e9796" fill-opacity="0.55"/><circle cx="70.8" cy="102.2" r="4.2" fill="#3a6c8c" fill-opacity="0.85"/><rect x="81" y="100.7" width="10.5" height="3" fill="#000" fill-opacity="0.08"/><circle cx="70.8" cy="153.8" r="4.2" fill="#3a6c8c" fill-opacity="0.85"/><rect x="81" y="152.3" width="10.5" height="3" fill="#000" fill-opacity="0.08"/><circle cx="70.8" cy="204.8" r="4.2" fill="#3a6c8c" fill-opacity="0.85"/><rect x="81" y="203.3" width="10.5" height="3" fill="#000" fill-opacity="0.08"/><circle cx="106.5" cy="74.5" r="1.6" fill="#000" fill-opacity="0.07"/><circle cx="106.5" cy="129" r="1.6" fill="#000" fill-opacity="0.07"/><circle cx="106.5" cy="180" r="1.6" fill="#000" fill-opacity="0.07"/><circle cx="106.5" cy="230.7" r="1.6" fill="#000" fill-opacity="0.07"/><line x1="106.5" y1="62.5" x2="106.5" y2="90.5" stroke="#000" stroke-opacity="0.03" stroke-width="1"/><line x1="106.5" y1="114" x2="106.5" y2="142" stroke="#000" stroke-opacity="0.03" stroke-width="1"/><line x1="106.5" y1="165.6" x2="106.5" y2="193" stroke="#000" stroke-opacity="0.03" stroke-width="1"/><line x1="106.5" y1="216.5" x2="106.5" y2="243" stroke="#000" stroke-opacity="0.03" stroke-width="1"/><rect x="99.5" y="244.6" width="14" height="5.6" rx="2.8" fill="#000" fill-opacity="0.13"/></g><path d="M141.6 0 Q128 12 110 19 Q92 28 91 50 Q91 72 104 84 Q114 94 126 94 Q140 92 154 84 Q168 78 180 81 Q196 86 211 92 V0 Z" fill="#fff" fill-opacity="0.14"/></svg></div>
<svg style="left:0;top:0" width="1536" height="1120" viewBox="0 0 1536 1120"><g transform="translate(850.10,955.50)"><path d="M24.1 13.4 V5.6 Q24.1 1.6 20.1 1.6 H5.7 Q1.7 1.6 1.7 5.6 V14 Q1.7 17.4 4.9 18.1 L6.1 24.2 L11.2 18.6" fill="none" stroke="#fff" stroke-width="2.5" stroke-linejoin="round" stroke-linecap="round"/><path d="M15.3 13.7 H25.2 Q28.2 13.7 28.2 16.7 V22.5 Q28.2 25.5 25.2 25.5 H24.4 V28.6 L20.2 25.5 H15.3 Q12.3 25.5 12.3 22.5 V16.7 Q12.3 13.7 15.3 13.7 Z" fill="none" stroke="#fff" stroke-width="2.5" stroke-linejoin="round" stroke-linecap="round"/></g></svg>
<div class="t" style="left:849.1px;top:1000.85px;font-size:22.8px;line-height:27.7px;color:#fff;font-weight:700;white-space:nowrap;letter-spacing:0.42px;-webkit-text-stroke:0.25px #fff">Communicat<br>ion</div>
<div class="a" style="left:1063.3px;top:815.9px;width:210.9px;height:265.0px;border-radius:8.5px;background:#dbb062;overflow:hidden;box-shadow:0 2px 5px rgba(16,24,40,0.09)"><svg style="left:0;top:0" width="210.9" height="265.0" viewBox="0 0 210.9 265.0"><filter id="bl7" x="-20%" y="-20%" width="140%" height="140%"><feGaussianBlur stdDeviation="1.8"/></filter><g filter="url(#bl7)"><rect x="10.5" y="11" width="91.0" height="24.5" rx="3" fill="#fff" fill-opacity="0.045" stroke="#000" stroke-opacity="0.025" stroke-width="1.2"/><rect x="110" y="11" width="93.5" height="24.5" rx="3" fill="#fff" fill-opacity="0.045" stroke="#000" stroke-opacity="0.025" stroke-width="1.2"/><rect x="57" y="42.5" width="97" height="20" rx="3" fill="none" stroke="#000" stroke-opacity="0.02" stroke-width="1"/><rect x="60.3" y="90.5" width="90.7" height="23.5" rx="3" fill="#fff" fill-opacity="0.045" stroke="#000" stroke-opacity="0.025" stroke-width="1.2"/><rect x="60.3" y="142" width="90.7" height="23.599999999999994" rx="3" fill="#fff" fill-opacity="0.045" stroke="#000" stroke-opacity="0.025" stroke-width="1.2"/><rect x="60.3" y="193" width="90.7" height="23.5" rx="3" fill="#fff" fill-opacity="0.045" stroke="#000" stroke-opacity="0.025" stroke-width="1.2"/><circle cx="20.3" cy="23.5" r="3.6" fill="#c9a05e" fill-opacity="0.75"/><rect x="32" y="18.8" width="14" height="2.6" fill="#c9a05e" fill-opacity="0.6"/><rect x="31.3" y="26.4" width="25.6" height="2.8" fill="#000" fill-opacity="0.08"/><circle cx="121" cy="23.5" r="3.4" fill="#c9a05e" fill-opacity="0.6"/><rect x="132" y="21.6" width="38" height="3" fill="#c9a05e" fill-opacity="0.55"/><circle cx="70.8" cy="102.2" r="4.2" fill="#b9625c" fill-opacity="0.85"/><rect x="81" y="100.7" width="10.5" height="3" fill="#000" fill-opacity="0.08"/><circle cx="70.8" cy="153.8" r="4.2" fill="#b9625c" fill-opacity="0.85"/><rect x="81" y="152.3" width="10.5" height="3" fill="#000" fill-opacity="0.08"/><circle cx="70.8" cy="204.8" r="4.2" fill="#b9625c" fill-opacity="0.85"/><rect x="81" y="203.3" width="10.5" height="3" fill="#000" fill-opacity="0.08"/><circle cx="106.5" cy="74.5" r="1.6" fill="#000" fill-opacity="0.07"/><circle cx="106.5" cy="129" r="1.6" fill="#000" fill-opacity="0.07"/><circle cx="106.5" cy="180" r="1.6" fill="#000" fill-opacity="0.07"/><circle cx="106.5" cy="230.7" r="1.6" fill="#000" fill-opacity="0.07"/><line x1="106.5" y1="62.5" x2="106.5" y2="90.5" stroke="#000" stroke-opacity="0.03" stroke-width="1"/><line x1="106.5" y1="114" x2="106.5" y2="142" stroke="#000" stroke-opacity="0.03" stroke-width="1"/><line x1="106.5" y1="165.6" x2="106.5" y2="193" stroke="#000" stroke-opacity="0.03" stroke-width="1"/><line x1="106.5" y1="216.5" x2="106.5" y2="243" stroke="#000" stroke-opacity="0.03" stroke-width="1"/><rect x="99.5" y="244.6" width="14" height="5.6" rx="2.8" fill="#000" fill-opacity="0.13"/></g><path d="M120.7 0 Q112 22 116 42 Q122 58 134 68 Q146 82 154 98 Q166 120 186 124 Q202 122 211 104 V0 Z" fill="#fff" fill-opacity="0.14"/></svg></div>
<svg style="left:0;top:0" width="1536" height="1120" viewBox="0 0 1536 1120"><g transform="translate(1082.50,955.50)"><rect x="1.4" y="1.4" width="26.4" height="27.1" rx="4.2" fill="none" stroke="#fff" stroke-width="2.5" stroke-linejoin="round" stroke-linecap="round"/><circle cx="14.6" cy="11.5" r="5.3" fill="none" stroke="#fff" stroke-width="2.5" stroke-linejoin="round" stroke-linecap="round"/><path d="M3.6 27.4 Q6 21.8 9.8 21.8 H19.6 Q23.2 21.8 25.6 27.4" fill="none" stroke="#fff" stroke-width="2.5" stroke-linejoin="round" stroke-linecap="round"/></g></svg>
<div class="t" style="left:1081.5px;top:1000.85px;font-size:22.8px;line-height:27.7px;color:#fff;font-weight:700;white-space:nowrap;letter-spacing:0.42px;-webkit-text-stroke:0.25px #fff">Convert Lead</div>
<div class="a" style="left:1296.1px;top:815.9px;width:210.9px;height:265.0px;border-radius:8.5px;background:#62ab8d;overflow:hidden;box-shadow:0 2px 5px rgba(16,24,40,0.09)"><svg style="left:0;top:0" width="210.9" height="265.0" viewBox="0 0 210.9 265.0"><filter id="bl8" x="-20%" y="-20%" width="140%" height="140%"><feGaussianBlur stdDeviation="1.8"/></filter><g filter="url(#bl8)"><rect x="10.5" y="11" width="91.0" height="24.5" rx="3" fill="#fff" fill-opacity="0.045" stroke="#000" stroke-opacity="0.025" stroke-width="1.2"/><rect x="110" y="11" width="93.5" height="24.5" rx="3" fill="#fff" fill-opacity="0.045" stroke="#000" stroke-opacity="0.025" stroke-width="1.2"/><rect x="57" y="42.5" width="97" height="20" rx="3" fill="none" stroke="#000" stroke-opacity="0.02" stroke-width="1"/><rect x="60.3" y="90.5" width="90.7" height="23.5" rx="3" fill="#fff" fill-opacity="0.045" stroke="#000" stroke-opacity="0.025" stroke-width="1.2"/><rect x="60.3" y="142" width="90.7" height="23.599999999999994" rx="3" fill="#fff" fill-opacity="0.045" stroke="#000" stroke-opacity="0.025" stroke-width="1.2"/><rect x="60.3" y="193" width="90.7" height="23.5" rx="3" fill="#fff" fill-opacity="0.045" stroke="#000" stroke-opacity="0.025" stroke-width="1.2"/><circle cx="20.3" cy="23.5" r="3.6" fill="#4e9796" fill-opacity="0.75"/><rect x="32" y="18.8" width="14" height="2.6" fill="#4e9796" fill-opacity="0.6"/><rect x="31.3" y="26.4" width="25.6" height="2.8" fill="#000" fill-opacity="0.08"/><circle cx="121" cy="23.5" r="3.4" fill="#4e9796" fill-opacity="0.6"/><rect x="132" y="21.6" width="38" height="3" fill="#4e9796" fill-opacity="0.55"/><circle cx="70.8" cy="102.2" r="4.2" fill="#3a6c8c" fill-opacity="0.85"/><rect x="81" y="100.7" width="10.5" height="3" fill="#000" fill-opacity="0.08"/><circle cx="70.8" cy="153.8" r="4.2" fill="#3a6c8c" fill-opacity="0.85"/><rect x="81" y="152.3" width="10.5" height="3" fill="#000" fill-opacity="0.08"/><circle cx="70.8" cy="204.8" r="4.2" fill="#3a6c8c" fill-opacity="0.85"/><rect x="81" y="203.3" width="10.5" height="3" fill="#000" fill-opacity="0.08"/><circle cx="106.5" cy="74.5" r="1.6" fill="#000" fill-opacity="0.07"/><circle cx="106.5" cy="129" r="1.6" fill="#000" fill-opacity="0.07"/><circle cx="106.5" cy="180" r="1.6" fill="#000" fill-opacity="0.07"/><circle cx="106.5" cy="230.7" r="1.6" fill="#000" fill-opacity="0.07"/><line x1="106.5" y1="62.5" x2="106.5" y2="90.5" stroke="#000" stroke-opacity="0.03" stroke-width="1"/><line x1="106.5" y1="114" x2="106.5" y2="142" stroke="#000" stroke-opacity="0.03" stroke-width="1"/><line x1="106.5" y1="165.6" x2="106.5" y2="193" stroke="#000" stroke-opacity="0.03" stroke-width="1"/><line x1="106.5" y1="216.5" x2="106.5" y2="243" stroke="#000" stroke-opacity="0.03" stroke-width="1"/><rect x="99.5" y="244.6" width="14" height="5.6" rx="2.8" fill="#000" fill-opacity="0.13"/></g><path d="M141.6 0 Q128 12 110 19 Q92 28 91 50 Q91 72 104 84 Q114 94 126 94 Q140 92 154 84 Q168 78 180 81 Q196 86 211 92 V0 Z" fill="#fff" fill-opacity="0.14"/></svg></div>
<svg style="left:0;top:0" width="1536" height="1120" viewBox="0 0 1536 1120"><g transform="translate(1315.30,955.50)"><path d="M24.1 13.4 V5.6 Q24.1 1.6 20.1 1.6 H5.7 Q1.7 1.6 1.7 5.6 V14 Q1.7 17.4 4.9 18.1 L6.1 24.2 L11.2 18.6" fill="none" stroke="#fff" stroke-width="2.5" stroke-linejoin="round" stroke-linecap="round"/><path d="M15.3 13.7 H25.2 Q28.2 13.7 28.2 16.7 V22.5 Q28.2 25.5 25.2 25.5 H24.4 V28.6 L20.2 25.5 H15.3 Q12.3 25.5 12.3 22.5 V16.7 Q12.3 13.7 15.3 13.7 Z" fill="none" stroke="#fff" stroke-width="2.5" stroke-linejoin="round" stroke-linecap="round"/></g></svg>
<div class="t" style="left:1314.3px;top:1000.85px;font-size:22.8px;line-height:27.7px;color:#fff;font-weight:700;white-space:nowrap;letter-spacing:0.42px;-webkit-text-stroke:0.25px #fff">Communicat<br>ion</div></div></body></html>
